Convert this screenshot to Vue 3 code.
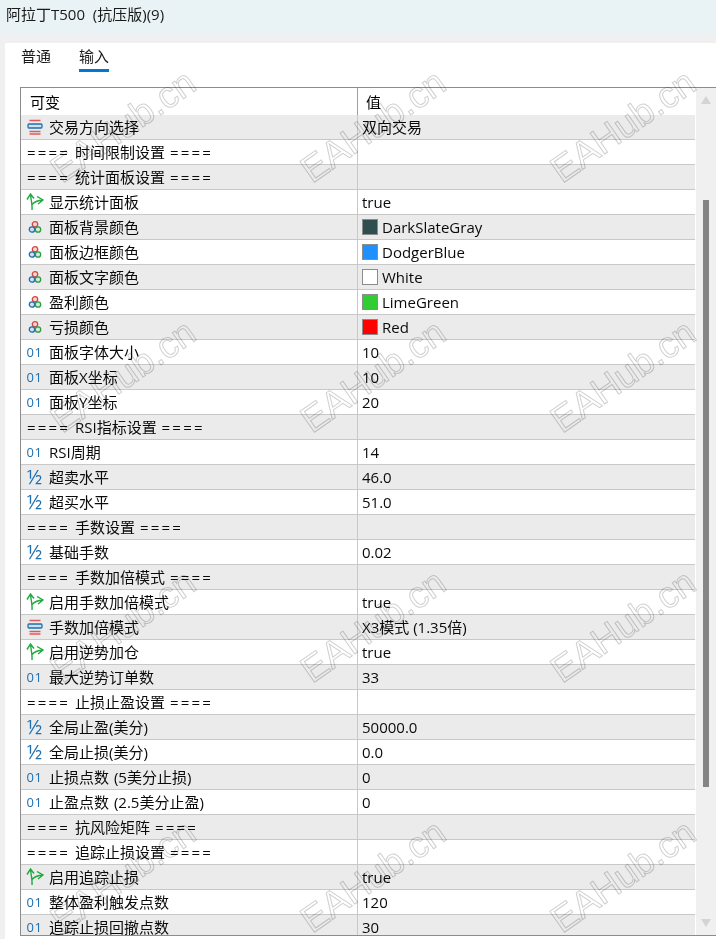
<script setup>
const rows = [
  { t: 'enum', n: '交易方向选择', v: '双向交易' },
  { n: '时间限制设置' },
  { n: '统计面板设置' },
  { t: 'bool', n: '显示统计面板', v: 'true' },
  { t: 'color', n: '面板背景颜色', v: 'DarkSlateGray', c: '#2f4f4f' },
  { t: 'color', n: '面板边框颜色', v: 'DodgerBlue', c: '#1e90ff' },
  { t: 'color', n: '面板文字颜色', v: 'White', c: '#ffffff' },
  { t: 'color', n: '盈利颜色', v: 'LimeGreen', c: '#32cd32' },
  { t: 'color', n: '亏损颜色', v: 'Red', c: '#ff0000' },
  { t: 'int', n: '面板字体大小', v: '10' },
  { t: 'int', n: '面板X坐标', v: '10' },
  { t: 'int', n: '面板Y坐标', v: '20' },
  { n: 'RSI指标设置' },
  { t: 'int', n: 'RSI周期', v: '14' },
  { t: 'dbl', n: '超卖水平', v: '46.0' },
  { t: 'dbl', n: '超买水平', v: '51.0' },
  { n: '手数设置' },
  { t: 'dbl', n: '基础手数', v: '0.02' },
  { n: '手数加倍模式' },
  { t: 'bool', n: '启用手数加倍模式', v: 'true' },
  { t: 'enum', n: '手数加倍模式', v: 'X3模式 (1.35倍)' },
  { t: 'bool', n: '启用逆势加仓', v: 'true' },
  { t: 'int', n: '最大逆势订单数', v: '33' },
  { n: '止损止盈设置' },
  { t: 'dbl', n: '全局止盈(美分)', v: '50000.0' },
  { t: 'dbl', n: '全局止损(美分)', v: '0.0' },
  { t: 'int', n: '止损点数 (5美分止损)', v: '0' },
  { t: 'int', n: '止盈点数 (2.5美分止盈)', v: '0' },
  { n: '抗风险矩阵' },
  { n: '追踪止损设置' },
  { t: 'bool', n: '启用追踪止损', v: 'true' },
  { t: 'int', n: '整体盈利触发点数', v: '120' },
  { t: 'int', n: '追踪止损回撤点数', v: '30' },
]
const marks = []
for (const y of [126, 376, 626, 876]) for (const x of [123, 373, 623]) marks.push({ x, y })
</script>

<template>
  <div class="page">
    <div class="title">阿拉丁T500 &nbsp;(抗压版)(9)</div>
    <div class="strip"></div>
    <div class="body">
      <div class="tabs">
        <div class="tab">普通</div>
        <div class="tab active">输入</div>
      </div>
      <div class="table">
        <div class="grid">
          <div class="head">
            <div class="hname">可变</div>
            <div class="hval">值</div>
          </div>
          <div class="rows">
            <div v-for="(r, i) in rows" :key="i" class="row" :class="{ odd: i % 2 === 0 }">
              <div class="name" :class="{ section: !r.t }">
                <span v-if="r.t" class="ico">
                  <svg v-if="r.t === 'enum'" width="16" height="17" viewBox="0 0 16 17">
                    <path d="M2.500 1.500h11M2.500 12.500h11M2.500 15h11" stroke="#e2595b" stroke-width="1.300" fill="none" />
                    <rect x="1" y="5" width="14" height="4" rx="1" fill="#cfe0ee" stroke="#1f6fb0" stroke-width="1.300" />
                  </svg>
                  <svg v-else-if="r.t === 'bool'" width="18" height="18" viewBox="0 1 18 18">
                    <path d="M6 18C6.500 13 5 8 4.500 2M1 7.500 4.500 2 8 6.500M6 12.500C8 10 12 8.500 17 8M11 4.500 17 8 12 12" stroke="#1eaa3c" stroke-width="1.400" fill="none" />
                  </svg>
                  <svg v-else-if="r.t === 'color'" width="14" height="14" viewBox="0 0 14 14">
                    <circle cx="7" cy="4.300" r="2.700" fill="#f6d8d4" stroke="#d8453c" stroke-width="1.300" />
                    <circle cx="4" cy="9.500" r="2.700" fill="#cfe0f0" stroke="#1f6fb0" stroke-width="1.300" />
                    <circle cx="10" cy="9.500" r="2.700" fill="#d4ecd6" stroke="#2c9a46" stroke-width="1.300" />
                  </svg>
                  <span v-else-if="r.t === 'int'" class="num">01</span>
                  <span v-else class="half">½</span>
                </span>
                <template v-if="r.t">{{ r.n }}</template>
                <template v-else><span class="eq">====</span> {{ r.n }} <span class="eq">====</span></template>
              </div>
              <div class="val">
                <span v-if="r.c" class="swatch" :style="{ background: r.c }"></span>
                <span>{{ r.v }}</span>
              </div>
            </div>
          </div>
        </div>
        <div class="scroll">
          <svg class="arrow" width="10" height="8" viewBox="0 0 10 8"><path d="M5 0 10 8H0Z" fill="#d4d4d4" /></svg>
          <div class="track"><div class="thumb"></div></div>
          <svg class="arrow" width="10" height="8" viewBox="0 0 10 8"><path d="M0 0H10L5 8Z" fill="#d4d4d4" /></svg>
        </div>
      </div>
    </div>
    <div v-for="(m, i) in marks" :key="'m' + i" class="mark" :style="{ left: m.x + 'px', top: m.y + 'px' }">EAHub.cn</div>
  </div>
</template>

<style scoped>
.page {
  position: relative;
  width: 716px;
  height: 939px;
  overflow: hidden;
  background: #f0f0f0;
  font-family: "Open Sans", "Noto Sans CJK SC", sans-serif;
  font-size: 15px;
  color: #000;
}
.title {
  height: 33px;
  background: #e9f3f6;
  padding-left: 6px;
  line-height: 28px;
  color: #1a1a1a;
  white-space: pre;
}
.strip {
  height: 10px;
  background: #f0f0f0;
}
.body {
  margin-left: 5px;
  height: 896px;
  background: #fff;
  padding-left: 15px;
  box-sizing: border-box;
}
.tabs {
  display: flex;
  gap: 28px;
  height: 44px;
  padding-left: 1px;
}
.tab {
  height: 29px;
  line-height: 26px;
  box-sizing: border-box;
  color: #1a1a1a;
}
.tab.active {
  border-bottom: 3px solid #0078d4;
}
.table {
  display: flex;
  height: 849px;
  border: 1px solid #8c8c8c;
  border-right: 0;
  box-sizing: border-box;
  overflow: hidden;
}
.grid {
  width: 675px;
  flex: none;
  display: flex;
  flex-direction: column;
}
.head {
  display: flex;
  height: 27px;
  flex: none;
  line-height: 29px;
}
.hname {
  width: 337px;
  padding-left: 9px;
  box-sizing: border-box;
  border-right: 1px solid #a0a0a0;
}
.hval {
  padding-left: 8px;
}
.rows {
  width: 674px;
  flex: 1;
  overflow: hidden;
}
.row {
  display: flex;
  height: 25px;
  box-sizing: border-box;
  border-bottom: 1px solid #c8c8c8;
  line-height: 24px;
  background: #fff;
}
.row.odd {
  background: #ebebeb;
}
.name {
  width: 337px;
  flex: none;
  padding-left: 28px;
  box-sizing: border-box;
  border-right: 1px solid #c8c8c8;
  white-space: pre;
  position: relative;
  color: #0a0a0a;
  word-spacing: 1px;
}
.name.section {
  padding-left: 6px;
}
.eq {
  letter-spacing: 2.200px;
}
.ico {
  position: absolute;
  left: 0;
  top: 0;
  width: 27px;
  height: 24px;
  display: flex;
  align-items: center;
  justify-content: center;
}
.num {
  font-size: 13px;
  color: #1f6fb0;
  letter-spacing: 0.5px;
  line-height: 22px;
}
.half {
  font-size: 20px;
  color: #1f6fb0;
  line-height: 24px;
}
.val {
  display: flex;
  align-items: center;
  padding-left: 4px;
  color: #0a0a0a;
}
.swatch {
  width: 16px;
  height: 16px;
  box-sizing: border-box;
  border: 1px solid #8c8c8c;
  margin-right: 4px;
}
.scroll {
  width: 20px;
  flex: none;
  background: #f0f0f0;
  display: flex;
  flex-direction: column;
  align-items: center;
  padding: 8px 0;
  box-sizing: border-box;
}
.arrow {
  flex: none;
}
.track {
  flex: 1;
  width: 6px;
  padding-top: 96px;
  padding-bottom: 132px;
  box-sizing: border-box;
}
.thumb {
  height: 100%;
  background: #858585;
}
.mark {
  position: absolute;
  transform: translate(-50%, -50%) rotate(-35deg);
  font-family: "Liberation Sans", sans-serif;
  font-size: 37px;
  line-height: 1;
  color: transparent;
  -webkit-text-stroke: 1px #d0d0d0;
  mix-blend-mode: multiply;
  white-space: nowrap;
  pointer-events: none;
}
</style>
